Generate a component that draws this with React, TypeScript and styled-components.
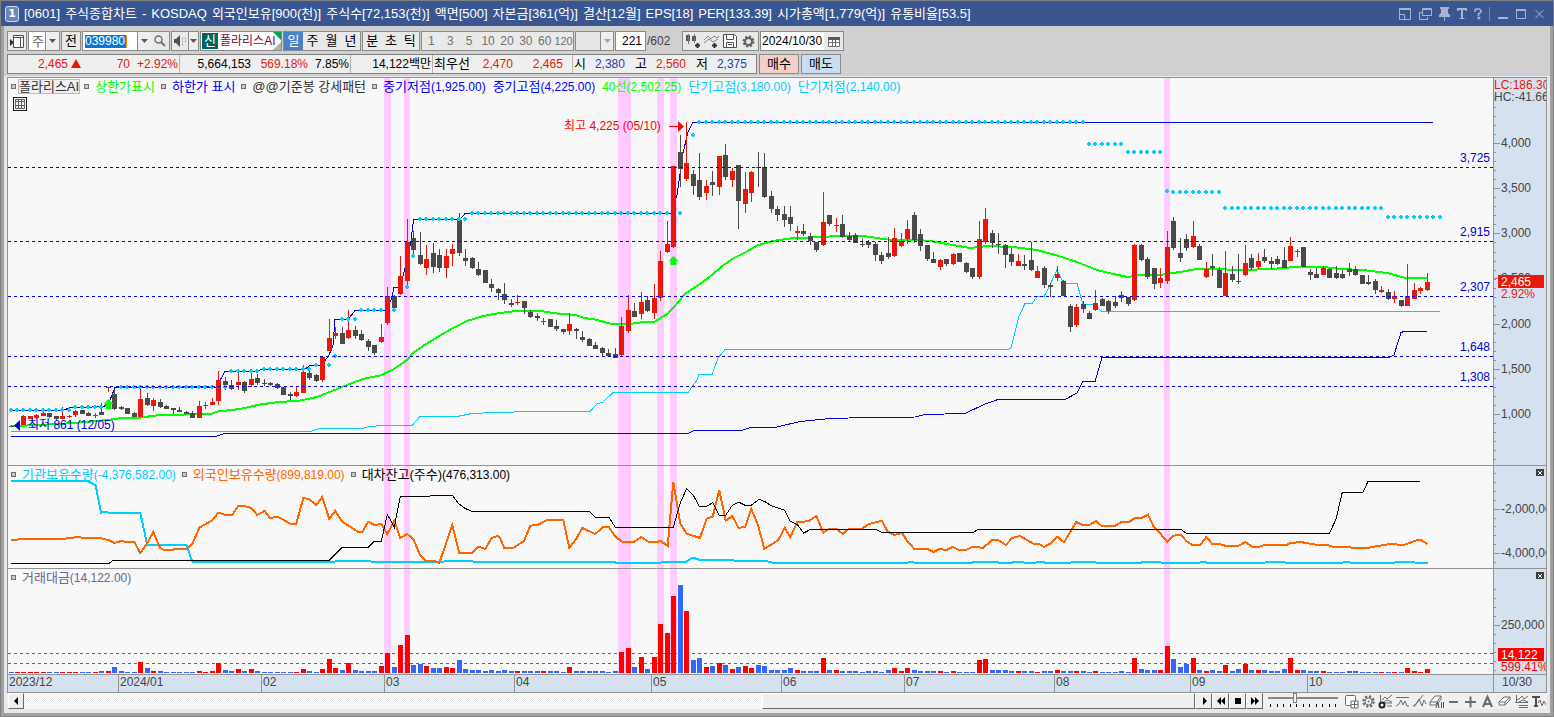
import React from 'react';
import styled, { createGlobalStyle } from 'styled-components';

const FONT = '"Liberation Sans", "Noto Sans CJK KR", sans-serif';
const LINE = '#929292';
const UP = '#e8190a';
const DOWN = '#4a4a4a';
const CYAN = '#00ccff';
const BLUE = '#0000d8';

const Global = createGlobalStyle`
  * { box-sizing: border-box; }
  body { margin: 0; font-family: ${FONT}; font-size: 12px; background: #e8e8e8; }
  button, input, select { font: inherit; color: inherit; margin: 0; padding: 0; border-radius: 0; }
  svg { display: block; }
`;

/* ---------- window shell ---------- */

const Shell = styled.div`
  display: flex;
  flex-direction: column;
  min-height: 100vh;
  border: 1px solid #808080;
`;

const TitleBar = styled.header`
  display: flex;
  align-items: center;
  height: 25px;
  padding: 0 5px 0 4px;
  background: #3a5691;
  color: #ffffff;
  font-size: 13px;
  white-space: nowrap;
`;

const Badge = styled.span`
  display: grid;
  place-items: center;
  width: 14px;
  height: 16px;
  margin-right: 5px;
  border: 1px solid #d5dcec;
  border-radius: 3px;
  background: #6c84b6;
  font-family: "DejaVu Sans", sans-serif;
  font-size: 11px;
  font-weight: bold;
`;

const TitleText = styled.h1`
  display: flex;
  flex: 1;
  gap: 5px;
  margin: 0;
  font-size: 13px;
  font-weight: normal;
  line-height: 25px;
  overflow: hidden;
`;

const WindowButtons = styled.div`
  display: flex;
  align-items: center;
  color: #a6b3d2;
`;

const WindowButton = styled.button<{ $w: number }>`
  display: grid;
  place-items: center;
  width: ${(p) => p.$w}px;
  height: 20px;
  border: 0;
  background: none;
`;

const WindowRule = styled.span`
  width: 1px;
  height: 14px;
  margin: 0 4px;
  background: #7287b5;
`;

const Body = styled.div`
  display: flex;
  flex: 1;
  flex-direction: column;
  border: solid #a0a0a0;
  border-width: 0 3px 3px;
`;

const Tools = styled.div`
  display: flex;
  flex-direction: column;
  gap: 3px;
  padding: 5px 3px 2px;
  background: #d0d0d0;
`;

const Row = styled.div`
  display: flex;
  gap: 1px;
  height: 20px;
  white-space: nowrap;
`;

/* ---------- tool bar ---------- */

const Group = styled.div<{ $w?: number; $bg?: string }>`
  display: flex;
  width: ${(p) => (p.$w ? p.$w + 'px' : 'auto')};
  border: 1px solid #8a8a8a;
  background: ${(p) => p.$bg || '#eeeeee'};
  overflow: hidden;
  flex: none;
  > * + * { border-left: 1px solid #8a8a8a; }
`;

const Tool = styled.button<{ $w?: number; $on?: boolean; $dim?: boolean; $size?: number }>`
  display: grid;
  place-items: center;
  flex: ${(p) => (p.$w ? 'none' : '1')};
  width: ${(p) => (p.$w ? p.$w + 'px' : 'auto')};
  min-width: 0;
  border: 0;
  background: ${(p) => (p.$on ? '#4a80c4' : '#e9e9e9')};
  color: ${(p) => (p.$on ? '#ffffff' : p.$dim ? '#707070' : '#000000')};
  font-size: ${(p) => p.$size || 13}px;
  line-height: 18px;
`;

const Field = styled.input<{ $align?: string }>`
  flex: 1;
  min-width: 0;
  width: 0;
  padding: 0 ${(p) => (p.$align ? 3 : 0)}px 0 1px;
  border: 0;
  outline: 0;
  background: #ffffff;
  text-align: ${(p) => p.$align || 'left'};
`;

const CodeBox = styled.div`
  display: flex;
  align-items: center;
  width: 54px;
  padding-left: 2px;
  background: #ffffff;
`;

const CodeField = styled.input`
  width: 42px;
  height: 13px;
  border: 0;
  border-right: 1px solid #ff8c1a;
  outline: 0;
  background: #0a78d7;
  color: #ffffff;
`;

const Pick = styled.select`
  flex: 1;
  min-width: 0;
  padding-left: 3px;
  border: 0;
  outline: 0;
  appearance: none;
  background: #ffffff;
  color: #606060;
  font-size: 13px;
  &:disabled { background: #e6e6e6; opacity: 1; }
`;

const StockName = styled.div`
  display: flex;
  align-items: center;
  gap: 2px;
  flex: 1;
  position: relative;
  padding: 1px;
  background: #ffffff;
  color: #800040;
  font-size: 12px;
  line-height: 16px;
`;

const NewTag = styled.span`
  width: 16px;
  background: #00665c;
  color: #ffffff;
  font-size: 13px;
  line-height: 16px;
  text-align: center;
`;

const Corner = styled.svg`
  position: absolute;
  top: 0;
  right: 0;
`;

const Count = styled.span`
  width: 34px;
  color: #404040;
  line-height: 20px;
`;

/* ---------- quote strip ---------- */

const Quote = styled.div`
  display: flex;
  width: 750px;
  border: 1px solid #808080;
  background: #efefef;
`;

const Cell = styled.div<{ $w: number }>`
  display: flex;
  align-items: baseline;
  width: ${(p) => p.$w}px;
  padding-left: 1px;
  line-height: 18px;
  & + & { border-left: 1px solid #b4b4b4; }
`;

const Value = styled.span<{ $w: number; $c?: string }>`
  width: ${(p) => p.$w}px;
  color: ${(p) => p.$c || '#000000'};
  text-align: right;
`;

const Caption = styled.span`
  font-size: 13px;
`;

const Order = styled.button<{ $bg: string }>`
  width: 40px;
  margin-left: 1px;
  border: 1px solid #8a8a8a;
  background: ${(p) => p.$bg};
  font-size: 13px;
  line-height: 18px;
`;

/* ---------- charts ---------- */

const Content = styled.main`
  display: flex;
  flex: 1;
  flex-direction: column;
  padding: 1px 3px 4px;
  background: #e8e8e8;
`;

const Frame = styled.div`
  display: flex;
  flex: 1;
  flex-direction: column;
  border: 1px solid ${LINE};
  border-bottom: 0;
`;

const Panel = styled.section<{ $h: number; $grow?: boolean }>`
  display: grid;
  grid-template-columns: minmax(0, 1fr) 53px;
  grid-template-rows: minmax(0, 1fr);
  flex: ${(p) => (p.$grow ? '1 0 auto' : 'none')};
  ${(p) => (p.$grow ? 'min-height' : 'height')}: ${(p) => p.$h}px;
  border-bottom: 1px solid ${LINE};
  background: #f8f8f8;
`;

const Plot = styled.div`
  position: relative;
  min-height: 0;
  overflow: hidden;
`;

const Axis = styled.div`
  position: relative;
  min-height: 0;
  border-left: 1px solid ${LINE};
  background: #d6e1ef;
  overflow: hidden;
`;

const Drawing = styled.svg`
  width: 100%;
  height: 100%;
  font-family: ${FONT};
  font-size: 12px;
`;

const Legend = styled.div`
  position: absolute;
  top: 1px;
  left: 3px;
  display: flex;
  align-items: center;
  height: 15px;
  font-size: 13px;
  white-space: nowrap;
`;

const Mark = styled.span`
  width: 5px;
  height: 5px;
  border: 1px solid #707070;
  background: #c8c8c8;
`;

const Series = styled.span<{ $c: string; $boxed?: boolean; $gap?: number }>`
  margin: 0 ${(p) => p.$gap ?? 6}px 0 ${(p) => (p.$boxed ? 2 : 6)}px;
  padding: 0 ${(p) => (p.$boxed ? 1 : 0)}px;
  outline: ${(p) => (p.$boxed ? '1px solid #bcbcbc' : '0')};
  outline-offset: -1px;
  background: ${(p) => (p.$boxed ? '#f0f0f0' : 'none')};
  color: ${(p) => p.$c};
  line-height: 15px;
`;

const Reading = styled.span`
  font-size: 12px;
`;

const GridButton = styled.button`
  position: absolute;
  top: 19px;
  left: 5px;
  display: grid;
  place-items: center;
  width: 14px;
  height: 14px;
  border: 1px solid #202020;
  background: #f4f4f4;
`;

const PanelClose = styled.button`
  position: absolute;
  top: 3px;
  right: 2px;
  display: grid;
  place-items: center;
  width: 8px;
  height: 7px;
  border: 0;
  background: #404040;
`;

const TimeAxis = styled.div`
  display: grid;
  grid-template-columns: minmax(0, 1fr) 53px;
  height: 18px;
  border-bottom: 1px solid ${LINE};
  background: #d6e1ef;
  color: #444444;
  line-height: 15px;
`;

const Months = styled.div`
  display: flex;
`;

const Month = styled.span<{ $w?: number }>`
  flex: ${(p) => (p.$w ? 'none' : '1')};
  width: ${(p) => (p.$w ? p.$w + 'px' : 'auto')};
  padding-left: 1px;
  & + & { border-left: 1px solid ${LINE}; }
`;

const LastDay = styled.span`
  padding-left: 8px;
  border-left: 1px solid ${LINE};
`;

/* ---------- bottom bar ---------- */

const Bottom = styled.div`
  display: flex;
  height: 16px;
  padding-left: 1px;
  background: #f0f0f0;
`;

const Push = styled.button<{ $w: number }>`
  display: grid;
  place-items: center;
  width: ${(p) => p.$w}px;
  border: 1px solid #ffffff;
  border-right-color: #686868;
  border-bottom-color: #686868;
  background: #efefef;
`;

const Track = styled.div`
  display: flex;
  justify-content: flex-end;
  flex: 1;
  background: repeating-conic-gradient(#ececec 0 25%, #ffffff 0 50%) 0 0 / 2px 2px;
`;

const Thumb = styled.div`
  width: 37%;
  border: 1px solid #ffffff;
  border-right-color: #686868;
  border-bottom-color: #686868;
  background: #efefef;
`;

const Zoom = styled.label`
  display: flex;
  flex-direction: column;
  width: 70px;
  margin: 0 5px;
`;

const Range = styled.input`
  width: 70px;
  height: 10px;
  appearance: none;
  background: linear-gradient(#888888, #888888) 0 4px / 100% 2px no-repeat;
  &::-webkit-slider-thumb {
    appearance: none;
    width: 4px;
    height: 10px;
    border: 1px solid #808080;
    background: #f4f4f4;
  }
`;

const IconRow = styled.div`
  display: flex;
  color: #6c6c6c;
`;

const IconButton = styled.button`
  display: grid;
  place-items: center;
  width: 17px;
  border: 0;
  background: none;
`;

/* ---------- market data ---------- */

const STEP = 6.497;
const barX = (i: number) => Math.floor(11 + STEP * i);

type Block = { top: number; rows: string };

// Each row: colour (r rising, g falling), high, body top, body bottom, low.
const candleBlocks: Block[] = [
  {
    top: 340,
    rows: `g 256 257 259 261;g 250 254 258 264;r 226 227 255 255;r 227 227 236 236;r 222 224 234 238;r 213 218 228 228;
g 219 219 230 234;g 228 228 236 240;r 202 227 237 237;r 226 229 231 235;r 210 213 224 230;g 210 210 221 221;g 216 219 228 228;
r 219 225 228 234;g 189 216 225 225;r 141 142 144 155;g 150 162 207 210;g 198 202 206 210;g 204 204 222 222;g 216 219 231 231;
r 147 177 231 231;g 159 174 195 198;r 174 180 198 213;g 177 186 201 204;g 195 197 207 207;g 205 205 209 222;g 201 209 215 216;
g 213 215 222 222;g 213 219 234 234;r 183 198 234 234;r 186 195 198 208;r 174 186 195 195;r 93 120 183 195;g 111 123 135 150;
g 120 135 147 150;r 93 126 135 150;g 123 126 153 158;r 87 117 135 141;g 102 114 129 135;g 117 129 132 139;g 126 129 135 138;
g 129 132 145 147;g 141 141 165 165;g 156 162 167 180;r 141 156 168 171;r 75 96 159 159;g 93 99 114 120;g 102 105 123 126;r 48 50 120 126`,
  },
  {
    top: 180,
    rows: `r 417 474 513 513;r 441 459 468 477;g 441 459 492 492;r 390 450 474 477;g 438 450 468 477;g 450 462 480 483;g 477 483 501 513;
g 495 495 519 525;r 432 471 486 489;r 321 348 429 435;g 345 348 384 393;r 228 288 342 345;r 117 186 303 315;g 153 174 210 228;
g 156 225 252 255;r 195 237 264 285;g 189 219 261 279;g 207 225 264 276;r 207 228 264 294;r 192 207 222 258;g 99 120 219 228;
g 207 234 243 258;g 231 234 264 267;g 246 267 285 288;g 270 270 309 309;g 297 312 324 336;g 324 327 339 360;g 309 342 360 372;
g 357 369 375 381;r 345 366 369 375;g 363 363 384 402;g 390 396 411 414;g 399 408 414 423;r 414 423 426 435;g 417 417 441 441;
g 420 438 447 453;g 447 447 456 462;r 399 432 453 465;g 444 447 453 477`,
  },
  {
    top: 100,
    rows: `g 693 711 720 726;g 714 717 738 738;g 726 735 747 747;g 741 744 759 768;g 747 759 768 768;g 744 762 774 774;r 651 678 765 768;
r 585 630 693 699;g 609 633 651 651;r 576 606 642 657;g 588 600 633 636;r 552 594 639 657;r 453 483 594 603;r 363 432 456 459;
r 198 198 441 444;g 105 156 207 261;r 66 189 237 243;g 210 222 258 285;g 159 240 291 300;r 240 258 279 300;g 213 246 255 288;
r 168 168 261 285;g 132 165 231 240;r 204 213 240 261;g 195 195 303 387;r 216 267 312 339;r 213 216 279 306;g 156 201 204 261;
g 159 201 291 294;g 273 288 327 339;g 318 327 345 363;g 318 342 360 381;g 318 351 372 393;r 378 393 399 420;g 372 393 402 408;
g 399 408 423 435;g 426 426 450 456;r 276 366 435 438;g 345 345 372 378;r 354 375 378 396;g 345 372 411 414;g 396 408 420 423;
g 399 405 429 429;g 417 432 435 441;g 420 426 435 444;g 426 432 465 483;g 456 465 483 492;g 411 459 471 477;r 384 414 468 471;
r 399 423 438 441;r 360 387 417 432;g 336 345 420 429;g 387 402 438 453;g 435 435 477 483;g 456 477 489 489;r 477 480 501 510;
g 477 477 492 498;r 459 462 492 495;g 459 459 486 486`,
  },
  {
    top: 180,
    rows: `g 246 249 276 279;g 264 264 291 297;r 123 177 291 297;r 84 117 186 192;g 150 159 189 204;g 159 192 195 222;g 192 195 225 264;
g 204 222 246 258;r 222 243 258 258;g 225 252 258 270;g 186 240 270 273;r 258 273 294 294;g 258 264 315 324;g 309 315 321 351;
r 258 282 294 303;g 300 303 348 348;g 372 378 441 456;r 372 381 435 441;g 363 372 387 399;g 393 399 417 417;r 330 369 390 393;
g 354 357 378 378;g 360 363 393 402;g 348 366 378 384;g 333 345 354 366;g 351 351 372 378;r 192 195 360 363;g 192 195 240 243;
g 231 237 291 297;g 264 264 312 327;r 264 294 309 324;r 153 201 303 312;g 111 123 204 210;g 174 219 234 246;g 162 177 204 213;
r 123 168 201 204;g 192 198 240 240;r 246 267 291 294;g 222 258 264 288;g 261 270 324 324;r 213 279 348 348;g 258 282 300 306;
g 222 303 306 312;r 195 249 285 288`,
  },
  {
    top: 100,
    rows: `g 462 474 504 510;r 459 483 501 507;g 447 471 483 489;g 471 483 492 507;g 468 477 492 495;g 441 480 504 504;r 411 438 483 483;
r 447 453 456 471;g 441 441 501 501;g 507 516 525 540;g 504 522 534 534;r 498 504 525 525;g 504 507 534 534;g 498 519 534 537;
g 510 522 534 537;g 489 507 516 528;g 498 507 525 528;g 525 525 552 552;g 525 546 552 555;g 537 543 570 582;r 558 570 576 579;
g 567 576 597 600;r 573 588 597 609;g 600 600 618 621;r 492 588 618 618;r 549 570 597 597;r 561 564 573 582;r 519 546 570 573`,
  },
];

const candles = candleBlocks.flatMap(({ top, rows }) =>
  rows.split(';').map((row) => {
    const [kind, ...v] = row.trim().split(' ');
    const [high, open, close, low] = v.map((n) => Math.round(top + Number(n) / 3));
    return { kind, high, open, close, low };
  })
);

const turnover = `b3 r3 r3 r3 r3 r3 b3 b3 r3 r3 r3 b3 b3 r3 b6 r6 b18 b6 b3 b3 r33 b15 r6 b6 b3 b3 b3 b3 b3 r6 r3 r6 r30 b9 b6 r12 b6 r12 b6 b3 b3 b3 b3 b3 r3 r12 b6 b3 r12 r42
r15 b9 r30 b9 b6 b6 b6 r21 r60 b18 r84 r114 b24 b27 r21 b15 b15 r18 r15 b39 b12 b9 b9 b6 b9 b6 b9 b6 r6 b6 b6 b6 r6 b6 b6 b3 r18 b6 b6 b6 b6 b6 b3 b6 r63 r75 b18 r48 b12 r48
r147 r120 r231 b264 r186 b39 b45 r18 b21 r30 b24 r12 b18 r21 r15 b24 b21 b9 b9 b9 b15 r9 b6 b6 b6 r45 b9 r9 b6 b6 b6 b3 b6 b6 b3 b9 r15 r6 r15 b9 b6 b6 b6 r6 b3 r6 b3 b3 b3 r39
r42 b9 b9 b9 b6 r6 b6 b6 r3 b6 b6 r9 b6 b6 r6 b6 b3 r6 b3 b3 b3 b6 b3 r45 b12 b9 b9 r9 r81 b42 b18 b27 r45 b9 r6 b9 b6 r24 b6 b12 r27 b9 r9 b9 b6 b6 b12 r45 r9 b9
b6 b6 r6 b3 b3 b3 b6 b6 b3 b3 b3 r3 b3 r3 b3 r15 r6 r3 r12`
  .split(/\s+/)
  .map((v) => ({ kind: v[0], size: Number(v.slice(1)) / 3 }));

// Runs of marker dots: first bar, last bar, height.
const dotRuns: number[][] = [
  [0, 9, 410], [10, 14, 407], [17, 31, 387], [33, 33, 387], [34, 38, 371], [39, 46, 369], [47, 47, 365], [49, 49, 365],
  [50, 50, 356], [51, 53, 319], [54, 57, 310], [59, 59, 310], [61, 61, 287], [62, 62, 256], [63, 70, 219], [71, 101, 213],
  [103, 103, 213], [105, 105, 135], [106, 165, 122], [166, 171, 144], [172, 177, 152], [178, 178, 191], [179, 186, 192],
  [187, 211, 208], [212, 220, 217],
];

const average = `11,426.5 35,425 60,424 85,422 108,420 118,418.5 141,417.5 160,415 185,414.5 212,413.5 218,411.5 240,409 260,404.5 275,402.5 300,400.5 317,397
327,393 337,389 347,385 363,379 380,375.5 393,369.5 407,360 413,353 423,346 440,335.5 453,328 467,321 483,316 500,313 520,310.5 537,310.5 557,313.5 575,315
585,318 595,319.5 610,323.5 630,324 640,322.5 655,321.5 668,313.5 673,308 685,294 693,288.5 707,279 723,265.5 733,258.5 747,251.5 757,245.5 773,241 793,238
823,237 840,235.5 867,236.5 887,239.5 920,240 933,241.5 970,248 987,246 1013,247 1037,250 1057,255.5 1077,262 1097,270 1113,274 1128,277 1143,274.5 1163,274.5
1180,272 1200,268.5 1220,268.5 1227,269.5 1257,269.5 1277,268.5 1301,266.5 1324,267 1337,268.5 1367,270.5 1387,273 1404,277.5 1409,278 1427,278`;

const midHigh = `11,410.5 63,410.5 69,408 104,406.5 110,400 115,387.5 216,387.5 225,371.5 256,371 262,369.5 305,369 310,365.5 322,365 329,355 333,345 335,319.5
348,319.5 355,310.5 385,310.5 391,300 394,287.5 400,287 405,268 411,241 413.5,219.5 460,219.5 465,213.5 671,213.5 677,195 683,153 688,132 693,122.5 1433,122.5`;

const midLow = `11,436.5 215,436.5 225,433.5 688,433.5 694,430.5 742,430.5 750,427.5 775,427.5 800,421.5 830,418.5 868,417.5 915,417 925,414.5 965,413.5 985,404
998,399.5 1065,399.5 1077,393 1083,381.5 1095,381.5 1102,357.5 1389,357.5 1394,355 1401,332.5 1404,331.5 1427,331.5`;

const shortLow = `11,431.5 311,431.5 319,428.5 363,428.5 368,426.5 384,425.5 412,425.5 417,420 420,416.5 457,416.5 472,413.5 495,412.5 533,411.5 590,411.5 597,404
603,402 613,392.5 688,392.5 697,380 699,374.5 712,374.5 718,358 725,349.5 1008,349.5 1011,348 1019,316 1025,303.5 1032,303.5 1037,296.5 1044,296.5 1050,285
1057,269.5 1063.5,283.5 1077,283.5 1083,304.5 1093,304.5 1102,311.5 1440,311.5`;

const spread = (parts: [number, string][]) =>
  parts
    .map(([left, list]) =>
      list
        .trim()
        .split(/\s+/)
        .map((p) => {
          const [x, y] = p.split(',').map(Number);
          return `${(left + x / 3).toFixed(1)},${(460 + y / 3).toFixed(1)}`;
        })
        .join(' ')
    )
    .join(' ');

const foreign = spread([
  [0, `34,240 72,237 187,237 210,234 234,231 250,234 303,235 325,240 343,249 364,243 382,246 403,246 421,279 442,249 460,216 481,265 490,269 520,269 523,267 559,267
577,252 598,203 637,181 655,158 673,164 697,164 715,138 733,138 754,144 772,165 794,153 810,174 832,170 850,179 871,191 889,191 910,114 928,118 949,135 967,111
988,177 1006,153 1027,185 1060,206 1075,216 1087,216 1105,185 1123,195 1144,192 1162,222 1183,183 1201,234 1222,222 1240,237 1261,287 1279,303 1303,303 1318,309
1357,195 1378,279 1417,279 1435,260 1456,267 1475,234 1495,227`],
  [500, `0,234 13,264 40,264 72,243 91,197 115,194 140,180 190,180 208,264 230,234 247,204 286,222 309,201 327,201 346,230 367,245 403,245 424,231 445,245 475,245
481,242 503,258 520,66 541,191 560,221 600,234 620,176 638,170 658,90 677,182 697,168 716,204 736,200 754,147 774,195 793,267 835,240 854,204 871,231 892,186
925,184 949,168 970,218 988,206 1010,206 1028,222 1046,207 1085,207 1105,193 1145,182 1163,215 1183,225 1206,219 1222,243 1243,267 1283,267 1300,276 1318,267
1340,270 1358,261 1378,270 1397,270 1417,261 1450,263 1478,239 1493,239 1517,255 1537,234 1560,228`],
  [1034, `0,252 15,252 30,261 50,250 70,230 90,247 127,186 145,195 166,195 185,183 203,198 243,198 262,186 285,186 303,174 322,174 342,164 360,202 380,222 400,246
418,227 440,224 457,243 475,255 499,255 517,231 535,252 555,252 577,258 613,258 634,246 655,260 675,261 690,255 758,255 770,249 800,246 845,254 880,255 900,261
940,261 960,264 1000,264 1025,259 1070,252 1110,255 1150,240 1160,240 1180,252`],
]);

const institution = spread([
  [0, `34,63 262,63 270,67 287,76 303,158 315,156 335,159 421,159 442,255 559,255 577,305 1000,305 1015,303 1095,303 1130,306 1320,306 1345,303 1415,303 1420,305`],
  [500, `340,305 350,309 480,309 485,306 558,306 570,297 580,293 590,297 600,300 695,300 715,304 800,304 820,308 1220,309 1230,306 1240,306 1245,309 1415,309 1420,306
1490,306 1500,309 1535,309 1540,306`],
  [1034, `0,309 12,306 28,306 35,309 108,309 113,306 183,306 188,309 320,309 325,306 378,306 383,309 495,309 500,306 515,306 520,309 690,309 695,306 750,306 755,309
925,309 930,306 945,306 950,309 1080,309 1085,306 1140,306 1145,309 1182,309`],
]);

const lending = spread([
  [0, `34,310 327,310 340,301 988,301 1027,262 1105,262 1123,244 1144,244 1162,163 1183,202 1201,109 1290,109 1293,106 1357,106 1375,130 1395,145 1415,154`],
  [500, `268,154 286,172 327,172 346,202 520,202 541,128 560,86 580,106 598,139 620,139 638,128 658,166 677,166 697,136 716,126 735,136 754,136 777,118 795,125 815,138
854,151 871,184 892,194 911,219 932,208 1128,208 1145,217 1420,217 1435,208`],
  [1034, `440,208 457,220 886,220 906,178 925,97 987,97 1002,64 1158,64`],
]);

const bands = [[384, 7], [404, 6], [618, 13], [657, 7], [670, 7], [1164, 6]];
const levels: [number, string][] = [[167, '3,725'], [241, '2,915'], [296, '2,307'], [356, '1,648'], [386, '1,308']];
const months: [string, number?][] = [
  ['2023/12', 110], ['2024/01', 143], ['02', 123], ['03', 130], ['04', 137], ['05', 130], ['06', 123], ['07', 150], ['08', 136], ['09', 117], ['10'],
];

/* ---------- small pieces ---------- */

const Bands = () => (
  <>
    {bands.map(([x, w]) => (
      <rect key={x} x={x} y={0} width={w} height={2000} fill="#ffccff" />
    ))}
  </>
);

const Arrow = ({ dim }: { dim?: boolean }) => (
  <svg width="7" height="4" aria-hidden="true">
    <path d="M0 0h7L3.500 4z" fill={dim ? '#a8a8a8' : '#585858'} />
  </svg>
);

const ArrowCell = styled.span<{ $w?: number }>`
  display: grid;
  place-items: center;
  width: ${(p) => p.$w || 14}px;
  flex: none;
  background: #eeeeee;
`;

const Ticks = ({ from, to, gap }: { from: number; to: number; gap: number }) => {
  const list: number[] = [];
  for (let y = from; y <= to; y += gap) list.push(Math.round(y));
  return (
    <>
      {list.map((y) => (
        <rect key={y} x={0} y={y} width={2} height={1} fill={LINE} />
      ))}
    </>
  );
};

const Scale = ({ y, children }: { y: number; children: string }) => (
  <>
    <rect x={0} y={y} width={6} height={1} fill={LINE} />
    <text x={7} y={y + 4} fill="#444444">{children}</text>
  </>
);

const toolIcons: [string, React.ReactNode][] = [
  ['새 창', <><rect x="1.500" y="1.500" width="10" height="10" rx="1" fill="#fff" stroke="currentColor" /><path d="M7 7h7v7H7zM10.500 7v7M7 10.500h7" fill="#fff" stroke="currentColor" /></>],
  ['설정', <><circle cx="7.500" cy="7.500" r="5" fill="none" stroke="currentColor" strokeWidth="2.500" strokeDasharray="2.200 1.700" /><circle cx="7.500" cy="7.500" r="3.500" fill="none" stroke="currentColor" /><circle cx="7.500" cy="7.500" r="1" fill="currentColor" /></>],
  ['지표 설정', <><path d="M2.500 1v7M2 9h12M4 6l3-3 2 2 5-4M6 8l3-2 5 2M9 12h5" fill="none" stroke="currentColor" /><circle cx="4" cy="11" r="2.500" fill="#fff" stroke="#202020" strokeWidth="2" /></>],
  ['지지선', <path d="M1 3.500h13M1 12l3-2 2-4 2 5 2-4 2 5h2" fill="none" stroke="currentColor" />],
  ['추세선', <path d="M2 13L11 1M1 12l3-2 3-5 3 7 2-6 2 4" fill="none" stroke="currentColor" />],
  ['모두 지우기', <><path d="M1 8l5-6h6l-4 6zM1 8v3h6l1-3M12 2v3l-2 3" fill="#fff" stroke="currentColor" /><path d="M7 14l2-6 1 6M12.500 8v6M14.500 8v6" fill="none" stroke="#505050" /></>],
  ['축소', <path d="M3 8h9" fill="none" stroke="currentColor" strokeWidth="2" />],
  ['확대', <path d="M2 8h11M7.500 2.500v11" fill="none" stroke="currentColor" strokeWidth="2" />],
  ['글자', <path d="M3 13L7.500 3 12 13M5 10h5" fill="none" stroke="currentColor" strokeWidth="2.200" />],
  ['지우개', <path d="M2 8l5-5h6l-5 5zM2 8v3h6V8M13 3v3l-5 5" fill="#fff" stroke="currentColor" />],
  ['지표 목록', <path d="M2.500 1v7M2 6l3-1 3-3 2 3 4-3M1 8.500h13M5 11.500h9M5 13.500h9M5 8l4-2 5 2" fill="none" stroke="currentColor" />],
  ['문자 도구', <><path d="M1 3h8M5 3v9M3 12h4" fill="none" stroke="#505050" strokeWidth="2" /><path d="M7 9l2-3 2 6 2-5 2 4" fill="none" stroke="currentColor" /></>],
];

const playIcons: [string, string][] = [
  ['재생', 'M5 2v8l4-4z'],
  ['뒤로', 'M6 2v8L2 6zM10 2v8L6 6z'],
  ['정지', 'M3 3h6v6H3z'],
  ['앞으로', 'M2 2v8l4-4zM6 2v8l4-4z'],
];

const titleParts = [
  '[0601]', '주식종합차트', '-', 'KOSDAQ', '외국인보유[900(천)]', '주식수[72,153(천)]', '액면[500]', '자본금[361(억)]', '결산[12월]', 'EPS[18]',
  'PER[133.39]', '시가총액[1,779(억)]', '유통비율[53.5]',
];

export default function App() {
  return (
    <>
      <Global />
      <Shell>
        <TitleBar>
          <Badge>1</Badge>
          <TitleText>
            {titleParts.map((t) => (
              <span key={t}>{t}</span>
            ))}
          </TitleText>
          <WindowButtons>
            <WindowButton $w={20} aria-label="축소 배치">
              <svg width="12" height="12"><path d="M.5.500h11v11H.5zM.5 6.500h5v5M0 1.500h12" fill="none" stroke="currentColor" /></svg>
            </WindowButton>
            <WindowButton $w={20} aria-label="창 복제">
              <svg width="13" height="12"><path d="M3.500.500h9v7h-9zM3 1.500h10M3 4.500H.500v7h8V9" fill="none" stroke="currentColor" /></svg>
            </WindowButton>
            <WindowButton $w={18} aria-label="고정">
              <svg width="11" height="14"><path d="M1 0h9v2H9v4l2 2v2H6v4H5v-4H0V8l2-2V2H1z" fill="currentColor" /></svg>
            </WindowButton>
            <WindowButton $w={17} aria-label="글꼴">
              <svg width="10" height="12"><path d="M0 0h10v3H8.500V2H6v8h1.500v1h-5v-1H4V2H1.500v1H0z" fill="currentColor" /></svg>
            </WindowButton>
            <WindowButton $w={15} aria-label="도움말">
              <svg width="8" height="12"><path d="M1 4V2l1-1h3.500L7 2.500V4L4.500 6v2M3.500 9.500h2v1h-2" fill="none" stroke="currentColor" strokeWidth="1.600" /></svg>
            </WindowButton>
            <WindowRule />
            <WindowButton $w={18} aria-label="최소화">
              <svg width="10" height="12"><path d="M0 9h10v2H0z" fill="currentColor" /></svg>
            </WindowButton>
            <WindowButton $w={18} aria-label="최대화">
              <svg width="10" height="12"><path d="M.5 2v8.500h9V2M0 2.500h10" fill="none" stroke="currentColor" /><path d="M0 1h10v2H0z" fill="currentColor" /></svg>
            </WindowButton>
            <WindowButton $w={18} aria-label="닫기">
              <svg width="9" height="12"><path d="M.5 2l8 8M8.500 2l-8 8" fill="none" stroke="currentColor" /></svg>
            </WindowButton>
          </WindowButtons>
        </TitleBar>

        <Body>
          <Tools>
            <Row>
              <Group $w={20}>
                <Tool aria-label="목록 열기">
                  <svg width="14" height="13"><path d="M3.500.500h10v12h-10zM3 2.500h11M10.500 3v9" fill="#fff" stroke="#505050" /><path d="M0 4v7l4-3.500z" fill="#303030" /></svg>
                </Tool>
              </Group>
              <Group $w={32}>
                <Pick aria-label="종목 구분" defaultValue="주"><option>주</option></Pick>
                <ArrowCell><Arrow /></ArrowCell>
              </Group>
              <Group $w={20}><Tool>전</Tool></Group>
              <Group $w={88}>
                <CodeBox><CodeField aria-label="종목 코드" defaultValue="039980" /></CodeBox>
                <ArrowCell><Arrow /></ArrowCell>
                <Tool aria-label="종목 검색">
                  <svg width="12" height="12"><circle cx="4.500" cy="4.500" r="3.500" fill="none" stroke="#707070" strokeWidth="1.500" /><path d="M7 7l4 4" stroke="#707070" strokeWidth="2" /></svg>
                </Tool>
              </Group>
              <Group $w={28}>
                <Tool aria-label="음성">
                  <svg width="13" height="12"><path d="M0 4h2l4-4v12L2 8H0z" fill="#505050" /><path d="M8 3.500h1M11 3.500h1M8 6.500h1M11 6.500h1M8 9.500h1" stroke="#909090" strokeWidth="1.500" /></svg>
                </Tool>
                <ArrowCell $w={10}><Arrow /></ArrowCell>
              </Group>
              <Group $w={82}>
                <StockName>
                  <NewTag>신</NewTag>
                  <Corner width="8" height="18" aria-hidden="true"><path d="M0 0h8v8z" fill="#00a651" /><path d="M8 10v8H0z" fill="#b0b0b0" /></Corner>
                  <span>폴라리스AI</span>
                </StockName>
              </Group>
              <Group $w={78}>
                <Tool $on>일</Tool><Tool>주</Tool><Tool>월</Tool><Tool>년</Tool>
              </Group>
              <Group $w={58}>
                <Tool>분</Tool><Tool>초</Tool><Tool>틱</Tool>
              </Group>
              <Group $w={153}>
                {['1', '3', '5', '10', '20', '30', '60', '120'].map((n) => (
                  <Tool key={n} $dim $size={n.length > 2 ? 11 : 12}>{n}</Tool>
                ))}
              </Group>
              <Group $w={39}>
                <Pick aria-label="사용자 주기" disabled><option></option></Pick>
                <ArrowCell $w={13}><Arrow dim /></ArrowCell>
              </Group>
              <Group $w={31}><Field aria-label="표시 봉 수" $align="right" defaultValue="221" /></Group>
              <Count>/602</Count>
              <Group $w={77}>
                <Tool aria-label="봉 추가">
                  <svg width="15" height="14"><path d="M1 1h4v6H1zM7 2h4v5H7z" fill="#585858" /><path d="M3.500 0v10M9.500 0v9" stroke="#787878" /><path d="M10 11.500h5M12.500 9v5" stroke="#303030" strokeWidth="2" /></svg>
                </Tool>
                <Tool aria-label="지표 추가">
                  <svg width="15" height="14"><path d="M0 6l4-4 3 3 3-3 3 2 2-2M0 9l5-4 4 3 5-3" fill="none" stroke="#888888" /><path d="M8 11.500h5M10.500 9v5" stroke="#303030" strokeWidth="2" /></svg>
                </Tool>
                <Tool aria-label="저장">
                  <svg width="14" height="14"><path d="M.5.500h11l2 2v11H.5z" fill="#fff" stroke="#505050" /><path d="M3.500.500v5h7v-5M3.500 13.500v-5h7v5M5 10.500h4" fill="none" stroke="#505050" /></svg>
                </Tool>
                <Tool aria-label="환경 설정">
                  <svg width="13" height="13"><circle cx="6.500" cy="6.500" r="5" fill="none" stroke="#606060" strokeWidth="2" strokeDasharray="2.200 1.700" /><circle cx="6.500" cy="6.500" r="3.500" fill="none" stroke="#606060" strokeWidth="2" /></svg>
                </Tool>
              </Group>
              <Group $w={84}>
                <Field aria-label="기준일" defaultValue="2024/10/30" />
                <Tool $w={19} aria-label="달력">
                  <svg width="12" height="11"><path d="M.5 1.500h11v9H.5zM4.500 4v6M7.500 4v6M1 6.500h10" fill="#fff" stroke="#707070" /><path d="M0 1h12v3H0z" fill="#585858" /></svg>
                </Tool>
              </Group>
            </Row>

            <Row>
              <Quote>
                <Cell $w={171}>
                  <Value $w={59} $c={UP}>2,465</Value>
                  <svg width="16" height="10" aria-hidden="true"><path d="M3 10h10L8 1z" fill={UP} /></svg>
                  <Value $w={46} $c={UP}>70</Value>
                  <Value $w={48} $c={UP}>+2.92%</Value>
                </Cell>
                <Cell $w={171}>
                  <Value $w={70}>5,664,153</Value>
                  <Value $w={57} $c={UP}>569.18%</Value>
                  <Value $w={41}>7.85%</Value>
                </Cell>
                <Cell $w={82}><Value $w={79}>14,122백만</Value></Cell>
                <Cell $w={140}>
                  <Caption>최우선</Caption>
                  <Value $w={43} $c={UP}>2,470</Value>
                  <Value $w={50} $c={UP}>2,465</Value>
                </Cell>
                <Cell $w={184}>
                  <Caption>시</Caption>
                  <Value $w={39} $c="#1a3fb4">2,380</Value>
                  <Value $w={22}><Caption>고</Caption></Value>
                  <Value $w={39} $c={UP}>2,560</Value>
                  <Value $w={22}><Caption>저</Caption></Value>
                  <Value $w={39} $c="#1a3fb4">2,375</Value>
                </Cell>
              </Quote>
              <Order $bg="#f4cfc9">매수</Order>
              <Order $bg="#c8def4">매도</Order>
            </Row>
          </Tools>

          <Content>
            <Frame>
              <Panel $h={388} $grow>
                <Plot>
                  <Drawing>
                    <g transform="translate(-8 -78)">
                      <Bands />
                      <polyline points={midHigh} fill="none" stroke={BLUE} shapeRendering="crispEdges" />
                      <polyline points={midLow} fill="none" stroke={BLUE} shapeRendering="crispEdges" />
                      <polyline points={shortLow} fill="none" stroke={CYAN} shapeRendering="crispEdges" />
                      <polyline points={average} fill="none" stroke="#00ff00" strokeWidth="2" shapeRendering="crispEdges" />
                      {candles.map((c, i) => (
                        <g key={i} fill={c.kind === 'r' ? UP : DOWN}>
                          <rect x={barX(i)} y={c.high} width={1} height={Math.max(1, c.low - c.high)} />
                          <rect x={barX(i) - 2} y={c.open} width={5} height={Math.max(1, c.close - c.open)} />
                        </g>
                      ))}
                      {dotRuns.flatMap(([from, to, y]) =>
                        Array.from({ length: to - from + 1 }, (_, k) => (
                          <path key={`${from}-${k}`} d={`M${barX(from + k) - 1} ${y - 2}h2v1h1v2h-1v1h-2v-1h-1v-2h1z`} fill={CYAN} />
                        ))
                      )}
                      {levels.map(([y]) => (
                        <path key={y} d={`M8 ${y + 0.5}H4000`} stroke={BLUE} strokeDasharray="3 3" />
                      ))}
                      <path d="M673.500 256l5 5h-2v4h-6v-4h-2zM108.500 399l5 5h-2v5h-6v-5h-2z" fill="#00ff00" />
                      <path d="M669 126.500h9" stroke="#ff0000" />
                      <path d="M678 121v11l6-5.500z" fill="#ff0000" />
                      <path d="M20 420v11l-6-5.500z" fill={BLUE} />
                      <text x="564" y="130" fill="#ff0000">최고 4,225 (05/10)</text>
                      <text x="28" y="429" fill={BLUE}>최저 861 (12/05)</text>
                    </g>
                    {levels.map(([y, label]) => (
                      <text key={y} x="100%" dx={-3} y={y - 83} textAnchor="end" fill={BLUE}>{label}</text>
                    ))}
                  </Drawing>
                  <Legend>
                    <Mark /><Series $c="#303030" $boxed $gap={4}>폴라리스AI</Series>
                    <Mark /><Series $c="#00ff00">상한가표시</Series>
                    <Mark /><Series $c="#0000ff">하한가 표시</Series>
                    <Mark /><Series $c="#303030">@@기준봉 강세패턴</Series>
                    <Mark /><Series $c="#0000ff" $gap={1}>중기저점<Reading>(1,925.00)</Reading></Series>
                    <Series $c="#0000ff" $gap={1}>중기고점<Reading>(4,225.00)</Reading></Series>
                    <Series $c="#00ff00" $gap={1}><Reading>40선(2,502.25)</Reading></Series>
                    <Series $c={CYAN} $gap={1}>단기고점<Reading>(3,180.00)</Reading></Series>
                    <Series $c={CYAN}>단기저점<Reading>(2,140.00)</Reading></Series>
                  </Legend>
                  <GridButton aria-label="데이터 표">
                    <svg width="10" height="10"><path d="M.5.500h9v9h-9zM3.500 0v10M6.500 0v10M0 2.500h10M0 6.500h10" fill="none" stroke="#606060" /></svg>
                  </GridButton>
                </Plot>
                <Axis>
                  <Drawing>
                    <Ticks from={20} to={385} gap={9.03} />
                    <text x={0} y={11} fill={UP}>LC:186.30</text>
                    <text x={0} y={23} fill="#444444">HC:-41.66</text>
                    <Scale y={65}>4,000</Scale>
                    <Scale y={110}>3,500</Scale>
                    <Scale y={155}>3,000</Scale>
                    <Scale y={200}>2,500</Scale>
                    <Scale y={246}>2,000</Scale>
                    <Scale y={291}>1,500</Scale>
                    <Scale y={336}>1,000</Scale>
                    <rect x={4} y={197} width={46} height={13} fill={UP} />
                    <text x={7} y={208} fill="#ffffff">2,465</text>
                    <text x={7} y={220} fill={UP}>2.92%</text>
                  </Drawing>
                </Axis>
              </Panel>

              <Panel $h={103}>
                <Plot>
                  <Drawing>
                    <g transform="translate(-8 -466)">
                      <Bands />
                      <polyline points={institution} fill="none" stroke={CYAN} strokeWidth="2" shapeRendering="crispEdges" />
                      <polyline points={foreign} fill="none" stroke="#ff6600" strokeWidth="2" shapeRendering="crispEdges" />
                      <polyline points={lending} fill="none" stroke="#000000" shapeRendering="crispEdges" />
                    </g>
                  </Drawing>
                  <Legend>
                    <Mark /><Series $c={CYAN}>기관보유수량<Reading>(-4,376,582.00)</Reading></Series>
                    <Mark /><Series $c="#ff6600">외국인보유수량<Reading>(899,819.00)</Reading></Series>
                    <Mark /><Series $c="#000000">대차잔고(주수)<Reading>(476,313.00)</Reading></Series>
                  </Legend>
                </Plot>
                <Axis>
                  <Drawing>
                    <Ticks from={7} to={100} gap={8.9} />
                    <Scale y={43}>-2,000,000</Scale>
                    <Scale y={87}>-4,000,000</Scale>
                  </Drawing>
                  <PanelClose aria-label="지표 닫기">
                    <svg width="4" height="4"><path d="M0 0l4 4M4 0L0 4" stroke="#fff" /></svg>
                  </PanelClose>
                </Axis>
              </Panel>

              <Panel $h={106}>
                <Plot>
                  <Drawing>
                    <g transform="translate(-8 -569)">
                      <Bands />
                      <path d="M8 653.500H4000M8 663.500H4000" stroke="#e010e0" strokeDasharray="3 3" />
                      {turnover.map((v, i) => (
                        <rect key={i} x={barX(i) - 2} y={673 - v.size} width={5} height={v.size} fill={v.kind === 'r' ? '#ff0000' : '#3366ff'} />
                      ))}
                    </g>
                  </Drawing>
                  <Legend>
                    <Mark /><Series $c="#666699">거래대금<Reading>(14,122.00)</Reading></Series>
                  </Legend>
                </Plot>
                <Axis>
                  <Drawing>
                    <Ticks from={20} to={105} gap={9} />
                    <Scale y={56}>250,000</Scale>
                    <rect x={4} y={79} width={46} height={13} fill="#ff0000" />
                    <text x={7} y={90} fill="#ffffff">14,122</text>
                    <text x={7} y={102} fill="#ff0000">599.41%</text>
                  </Drawing>
                  <PanelClose aria-label="거래대금 닫기">
                    <svg width="4" height="4"><path d="M0 0l4 4M4 0L0 4" stroke="#fff" /></svg>
                  </PanelClose>
                </Axis>
              </Panel>

              <TimeAxis>
                <Months>
                  {months.map(([label, w]) => (
                    <Month key={label} $w={w}>{label}</Month>
                  ))}
                </Months>
                <LastDay>10/30</LastDay>
              </TimeAxis>
            </Frame>

            <Bottom>
              <Push $w={16} aria-label="왼쪽으로">
                <svg width="6" height="8"><path d="M5 0v8L1 4z" /></svg>
              </Push>
              <Track><Thumb /></Track>
              {playIcons.map(([label, d]) => (
                <Push key={label} $w={17} aria-label={label}>
                  <svg width="12" height="12"><path d={d} /></svg>
                </Push>
              ))}
              <Zoom>
                <Range type="range" min={0} max={100} defaultValue={38} aria-label="차트 배율" />
                <svg width="70" height="4" aria-hidden="true">
                  {Array.from({ length: 11 }, (_, i) => (
                    <rect key={i} x={2 + Math.round(i * 6.5)} y={1} width={1} height={3} />
                  ))}
                </svg>
              </Zoom>
              <IconRow>
                {toolIcons.map(([label, icon]) => (
                  <IconButton key={label} aria-label={label}>
                    <svg width="15" height="15">{icon}</svg>
                  </IconButton>
                ))}
              </IconRow>
            </Bottom>
          </Content>
        </Body>
      </Shell>
    </>
  );
}
